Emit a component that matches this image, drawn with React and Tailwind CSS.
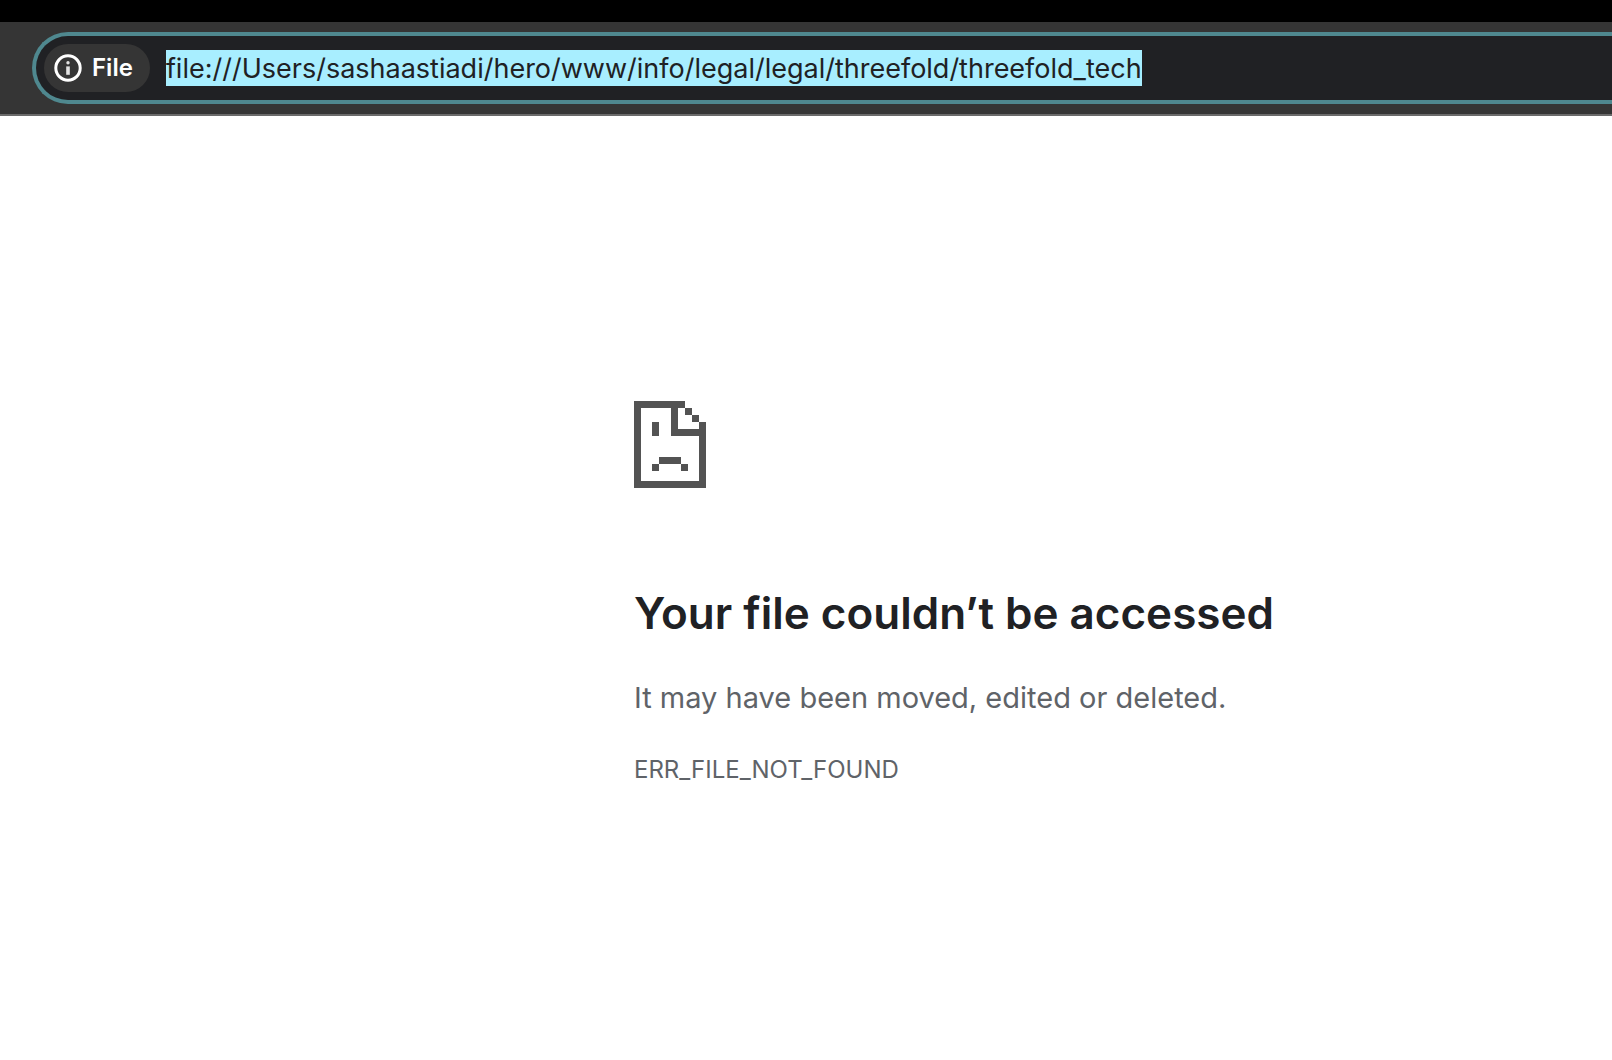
import React from "react";

function InfoIcon() {
  return (
    <svg viewBox="0 0 28 28" className="size-7 shrink-0" fill="none" aria-hidden="true">
      <circle cx="14" cy="14" r="12.2" stroke="#fff" strokeWidth="3" />
      <circle cx="14" cy="8.8" r="1.7" fill="#e3e3e3" />
      <rect x="12.2" y="12.4" width="3.6" height="8.4" fill="#e3e3e3" />
    </svg>
  );
}

function SadFileIcon() {
  return (
    <svg
      viewBox="0 0 72 87"
      className="h-[87px] w-[72px]"
      fill="#535353"
      shapeRendering="crispEdges"
      role="img"
      aria-label="Sad file"
    >
      <path d="M0 0H51V7H44V28H65V21H72V87H0ZM7 7V80H65V35H37V7Z" fillRule="evenodd" />
      <path d="M51 7h7v7h-7zM58 14h7v7h-7zM18 21h7v14h-7zM25 56h22v7H25zM18 63h7v7h-7zM47 63h7v7h-7z" />
    </svg>
  );
}

function AddressBar() {
  return (
    <header>
      <div className="h-[22px] bg-black" />
      <div className="border-b-2 border-[#6a6a6a] bg-[#353535] pt-[10px] pb-[10px] pl-8">
        <div className="flex h-[72px] items-center gap-4 rounded-l-full border-4 border-r-0 border-[#4f888f] bg-[#202124] pl-2">
          <button
            type="button"
            className="flex h-12 shrink-0 items-center gap-[10px] rounded-full bg-[#353535] pr-[17px] pl-[10px] text-2xl font-semibold text-white"
          >
            <InfoIcon />
            File
          </button>
          <input
            type="text"
            aria-label="Address"
            spellCheck={false}
            defaultValue="file:///Users/sashaastiadi/hero/www/info/legal/legal/threefold/threefold_tech"
            className="field-sizing-content h-9 bg-[#a8eeff] pt-px text-[27px] leading-9 text-[#202124] outline-none"
          />
        </div>
      </div>
    </header>
  );
}

export default function App() {
  return (
    <div className="min-h-screen bg-white font-['Inter',sans-serif]">
      <AddressBar />
      <main className="pt-[285px] pl-[634px]">
        <SadFileIcon />
        <h1 className="mt-24 text-[44px] leading-[58px] font-semibold text-[#202124]">
          Your file couldn’t be accessed
        </h1>
        <p className="mt-8 text-[29px] leading-[48px] text-[#5f6368]">
          It may have been moved, edited or deleted.
        </p>
        <p className="mt-6 text-2xl leading-[48px] text-[#5f6368]">ERR_FILE_NOT_FOUND</p>
      </main>
    </div>
  );
}
